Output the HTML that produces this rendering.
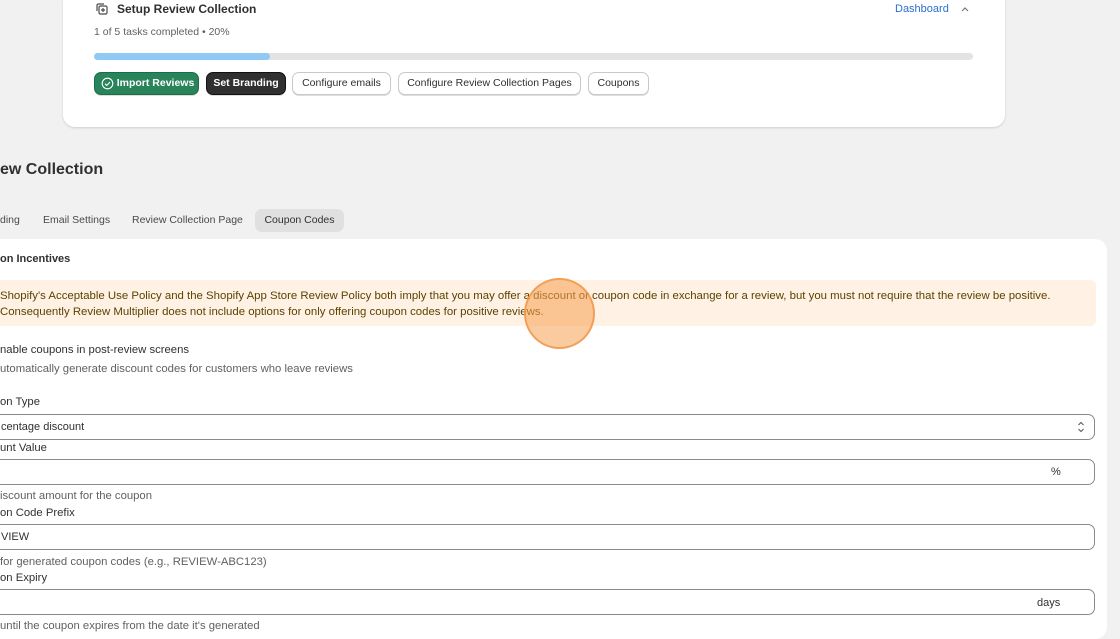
<!DOCTYPE html>
<html><head><meta charset="utf-8"><style>
*{box-sizing:border-box;margin:0;padding:0}
body{width:1120px;height:626px;overflow:hidden;background:#f1f1f1;font-family:"Liberation Sans",sans-serif;color:#303030;position:relative}
.a{position:absolute;white-space:nowrap}
.card1{position:absolute;left:63px;top:-10px;width:942px;height:137px;background:#fff;border-radius:12px;box-shadow:0 1px 2px rgba(0,0,0,.15)}
.btn{position:absolute;top:72px;height:23px;border-radius:7px;font-size:10.5px;line-height:21px;text-align:center;white-space:nowrap;border:1px solid #c9c9c9;background:#fff;color:#303030;box-shadow:0 1px 0 #ddd}
.card2{position:absolute;left:-20px;top:239px;width:1127px;height:400px;background:#fff;border-radius:12px}
.inp{position:absolute;left:-20px;width:1115px;height:26px;border:1px solid #8a8a8a;border-radius:7px;background:#fff;font-size:11px;line-height:24px;padding-left:20px;white-space:nowrap}
.lbl{position:absolute;left:0;font-size:11.3px;white-space:nowrap}
.help{position:absolute;left:0;font-size:11.3px;color:#616161;white-space:nowrap}
</style></head><body>
<div class="card1"></div>
<svg class="a" style="left:96px;top:3px" width="12" height="12" viewBox="0 0 12 12" fill="none" stroke="#4a4a4a" stroke-width="1.2"><rect x="3" y="3" width="8" height="8" rx="1.5"/><path d="M1 8V2.5A1.5 1.5 0 0 1 2.5 1H8"/><path d="M7 5v4M5 7h4"/></svg>
<div class="a" style="left:117px;top:2px;font-size:12px;font-weight:bold;color:#303030">Setup Review Collection</div>
<div class="a" style="left:895px;top:3px;font-size:11px;color:#2c6ecb">Dashboard</div>
<svg class="a" style="left:960px;top:5px" width="10" height="8" viewBox="0 0 10 8"><path d="M2 6l3-3 3 3" fill="none" stroke="#777" stroke-width="1.2"/></svg>
<div class="a" style="left:94px;top:26px;font-size:10.5px;color:#616161">1 of 5 tasks completed • 20%</div>
<div class="a" style="left:94px;top:53px;width:879px;height:7px;border-radius:4px;background:#e3e3e3"></div>
<div class="a" style="left:94px;top:53px;width:176px;height:7px;border-radius:4px;background:#91c9f5"></div>
<div class="btn" style="left:94px;width:105px;background:#29845a;border-color:#1f6b48;color:#fff;font-weight:bold;padding-left:18px">Import Reviews</div>
<svg class="a" style="left:101px;top:77px" width="13" height="13" viewBox="0 0 13 13" fill="none" stroke="#fff" stroke-width="1.1"><circle cx="6.5" cy="6.5" r="5.3"/><path d="M4 6.7l1.8 1.8L9 5"/></svg>
<div class="btn" style="left:206px;width:80px;background:#303030;border-color:#111;color:#fff;font-weight:bold">Set Branding</div>
<div class="btn" style="left:292px;width:99px">Configure emails</div>
<div class="btn" style="left:398px;width:183px">Configure Review Collection Pages</div>
<div class="btn" style="left:588px;width:61px">Coupons</div>

<div class="a" style="left:0;top:161px;font-size:16px;font-weight:bold;color:#303030">ew Collection</div>
<div class="a" style="left:0;top:214px;font-size:10.5px;color:#4a4a4a">ding</div>
<div class="a" style="left:43px;top:214px;font-size:10.5px;color:#4a4a4a">Email Settings</div>
<div class="a" style="left:132px;top:214px;font-size:10.5px;color:#4a4a4a">Review Collection Page</div>
<div class="a" style="left:255px;top:209px;width:89px;height:23px;border-radius:7px;background:#e0e0e0;font-size:10.5px;line-height:23px;text-align:center;color:#303030">Coupon Codes</div>

<div class="card2"></div>
<div class="a" style="left:0;top:253px;font-size:11px;font-weight:bold">on Incentives</div>
<div class="a" style="left:-10px;top:280px;width:1106px;height:46px;border-radius:6px;background:#fff1e3"></div>
<div class="a" style="left:0;top:288px;font-size:11.4px;color:#5e4200;line-height:16px">Shopify's Acceptable Use Policy and the Shopify App Store Review Policy both imply that you may offer a discount or coupon code in exchange for a review, but you must not require that the review be positive.<br>Consequently Review Multiplier does not include options for only offering coupon codes for positive reviews.</div>
<div class="lbl" style="top:344px">nable coupons in post-review screens</div>
<div class="help" style="top:363px">utomatically generate discount codes for customers who leave reviews</div>
<div class="lbl" style="top:396px">on Type</div>
<div class="inp" style="top:414px">centage discount</div>
<svg class="a" style="left:1076px;top:420px" width="10" height="14" viewBox="0 0 10 14"><path d="M2.5 5L5 2.5 7.5 5M2.5 9L5 11.5 7.5 9" fill="none" stroke="#555" stroke-width="1"/></svg>
<div class="lbl" style="top:442px">unt Value</div>
<div class="inp" style="top:459px"></div>
<div class="a" style="left:1051px;top:466px;font-size:11px">%</div>
<div class="help" style="top:490px">iscount amount for the coupon</div>
<div class="lbl" style="top:507px">on Code Prefix</div>
<div class="inp" style="top:524px">VIEW</div>
<div class="help" style="top:556px">for generated coupon codes (e.g., REVIEW-ABC123)</div>
<div class="lbl" style="top:572px">on Expiry</div>
<div class="inp" style="top:589px"></div>
<div class="a" style="left:1037px;top:597px;font-size:11px">days</div>
<div class="help" style="top:620px">until the coupon expires from the date it's generated</div>

<div class="a" style="left:524px;top:278px;width:71px;height:71px;border-radius:50%;background:rgba(245,160,80,.55);border:2px solid rgba(240,150,70,.8)"></div>
</body></html>
